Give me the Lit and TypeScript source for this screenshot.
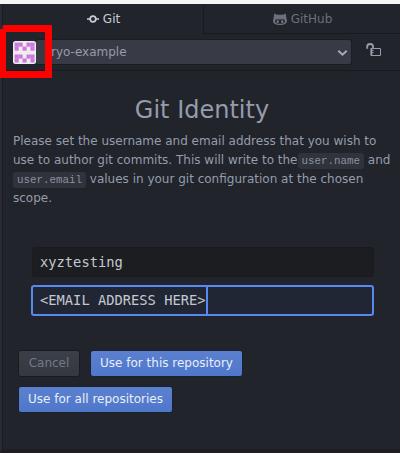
import { LitElement, html, css, svg } from "lit";
import { customElement } from "lit/decorators.js";

const AVATAR = ["11011", "10101", "00000", "11011", "10101"];

@customElement("git-avatar")
class GitAvatar extends LitElement {
  static styles = css`
    :host { display: block; width: 23px; height: 23px; margin-top: 1px; }
    svg { display: block; }
  `;
  render() {
    return html`<svg width="23" height="23" viewBox="0 0 23 23">
      <rect width="23" height="23" rx="2.5" fill="#f0edf1" />
      ${AVATAR.flatMap((row, y) =>
        [...row].map((c, x) =>
          c === "1"
            ? svg`<rect x=${1.6 + x * 3.96} y=${1.6 + y * 3.96} width="4.1" height="4.1" fill="#cc78de" />`
            : null
        )
      )}
    </svg>`;
  }
}

@customElement("app-root")
class AppRoot extends LitElement {
  static styles = css`
    :host {
      display: block; position: relative; box-sizing: border-box;
      width: 400px; height: 453px; overflow: hidden;
      padding: 4px 0 0; background: #f5f5f5; color: #959cab;
      font: 12px/19px "DejaVu Sans", sans-serif;
    }
    * { box-sizing: border-box; }
    .panel {
      height: 449px; background: #21242b;
      border-left: 2px solid #282b33; border-bottom: 4px solid #1c1e24;
      box-shadow: inset 1px 0 #191b20;
    }
    .tabs { display: flex; height: 30px; }
    .tab {
      display: flex; align-items: center; justify-content: center; gap: 4px;
      width: 201px; color: #c8ccd4; padding-left: 2px;
    }
    .tab.off {
      width: 197px; color: #6b707c; padding: 1px 0 0 1px;
      border-left: 1px solid #181a1f; border-bottom: 1px solid #181a1f;
    }
    .header {
      display: flex; align-items: center; height: 37px; padding: 0 0 1px 11px;
      border-bottom: 1px solid #181a1f;
    }
    .select {
      display: flex; align-items: center; justify-content: space-between;
      width: 316px; height: 26px; padding: 2px 3px 0 15px;
      background: #383b45; border: 1px solid #1b1d22; border-left: 0;
      border-radius: 3px; color: #959cab;
    }
    .lock { margin: 0 0 3px 14px; }
    svg { display: block; flex: none; }
    h1 {
      margin: 0; padding: 22px 0 0 2px; height: 61px;
      font-size: 24px; line-height: 34px; font-weight: 400; text-align: center;
    }
    .text { margin: 0 0 0 11px; white-space: nowrap; }
    code {
      padding: 2px 4px 2px; line-height: 0;
      font-family: "Liberation Mono", monospace; font-size: 10.83px;
      background: #30333b; border-radius: 3px; color: #8b919e;
    }
    .fields { padding: 39px 26px 0 29px; }
    .field {
      display: flex; align-items: center; height: 30px; margin: 0 0 0 1px; padding: 0 8px 1px 7px;
      font: 13.75px/20px "DejaVu Sans Mono", monospace; color: #c4c8d0;
      background: #1c1d21; border: 1px solid #1a1b1f; border-radius: 3px;
    }
    .field.focus {
      margin: 8px 0 0; height: 31px; background: #212635;
      border: 2px solid #568af2; padding: 0 7px; align-items: stretch; line-height: 26px;
    }
    .caret { width: 2px; background: #568af2; }
    .actions { display: flex; flex-wrap: wrap; gap: 9px 10px; padding: 34px 100px 0 16px; }
    button {
      height: 27px; padding: 0 9px 1px; border: 1px solid #1c2130; border-radius: 3px;
      font: inherit; color: #e9eefa; white-space: nowrap;
      background: linear-gradient(#5b80cf, #4f77ca);
    }
    button.main { width: 153px; }
    .cancel { width: 62px; color: #747a86; background: linear-gradient(#3b3f48, #353840); border-color: #191b20; }
    .mark {
      position: absolute; left: -1px; top: 25px; width: 53px; height: 53px;
      border: 7px solid #fe0000;
    }
    .edge { position: absolute; left: 0; top: 25px; width: 3px; height: 4px; background: #282b33; }
  `;
  render() {
    return html`
      <div class="panel">
        <div class="tabs">
          <div class="tab">
            <svg width="12" height="12" viewBox="0 0 12 12" fill="none" stroke="currentColor" stroke-width="1.7">
              <circle cx="6" cy="6" r="2.8" /><path d="M0 6h3.2M8.8 6H12" />
            </svg><span>Git</span>
          </div>
          <div class="tab off">
            <svg width="14" height="12" viewBox="0 0 14 12">
              <path fill="currentColor" fill-rule="evenodd" d="M1.200.6 4 1.700h6L12.800.6c.4.9.4 1.900.2 2.700.5.7.5 1.500.4 2.400.4.3.6.9.6 1.700C14 10.800 11 11.900 7 11.900S0 10.800 0 7.400c0-.8.2-1.400.6-1.700C.5 4.800.5 4 1 3.300.8 2.500.8 1.500 1.200.6ZM4 6.300C2.700 6.300 2.100 7.100 2.100 8.300c0 1.900 1.900 2.500 4.900 2.500s4.900-.6 4.900-2.500c0-1.200-.6-2-1.900-2-1 0-2 .1-3 .1S5 6.300 4 6.300Z" />
              <rect x="3.700" y="7" width="2.200" height="3.200" rx="1" fill="currentColor" />
              <rect x="8.100" y="7" width="2.200" height="3.200" rx="1" fill="currentColor" />
            </svg><span>GitHub</span>
          </div>
        </div>
        <div class="header">
          <git-avatar></git-avatar>
          <div class="select">
            <span>ryo-example</span>
            <svg width="11" height="8" viewBox="0 0 11 8" fill="none" stroke="#a4aab7" stroke-width="2"><path d="M1.300 1.700 5.500 5.700 9.700 1.700" /></svg>
          </div>
          <svg class="lock" width="16" height="14" viewBox="0 0 16 14" fill="none" stroke="#959cab">
            <path stroke-width="1.800" d="M1.200 5.800V3.500a2.900 2.500 0 0 1 5.800 0V5.500" />
            <path d="M5 5.500h9.500v7H5Z" /><path stroke-width="1.500" d="M5.500 5v8" /><path stroke-width="1" d="M5.500 7.500h2M5.500 9.500h2" />
          </svg>
        </div>
        <h1>Git Identity</h1>
        <p class="text">
          Please set the username and email address that you wish to<br />use to author git commits. This will write to the<code>user.name</code> and<br /><code>user.email</code> values in your git configuration at the chosen<br />scope.
        </p>
        <div class="fields">
          <div class="field">xyztesting</div>
          <div class="field focus"><span>&lt;EMAIL ADDRESS HERE&gt;</span><span class="caret"></span></div>
        </div>
        <div class="actions">
          <button class="cancel">Cancel</button>
          <button class="main">Use for this repository</button>
          <button>Use for all repositories</button>
        </div>
      </div>
      <div class="mark"></div>
      <div class="edge"></div>
    `;
  }
}
